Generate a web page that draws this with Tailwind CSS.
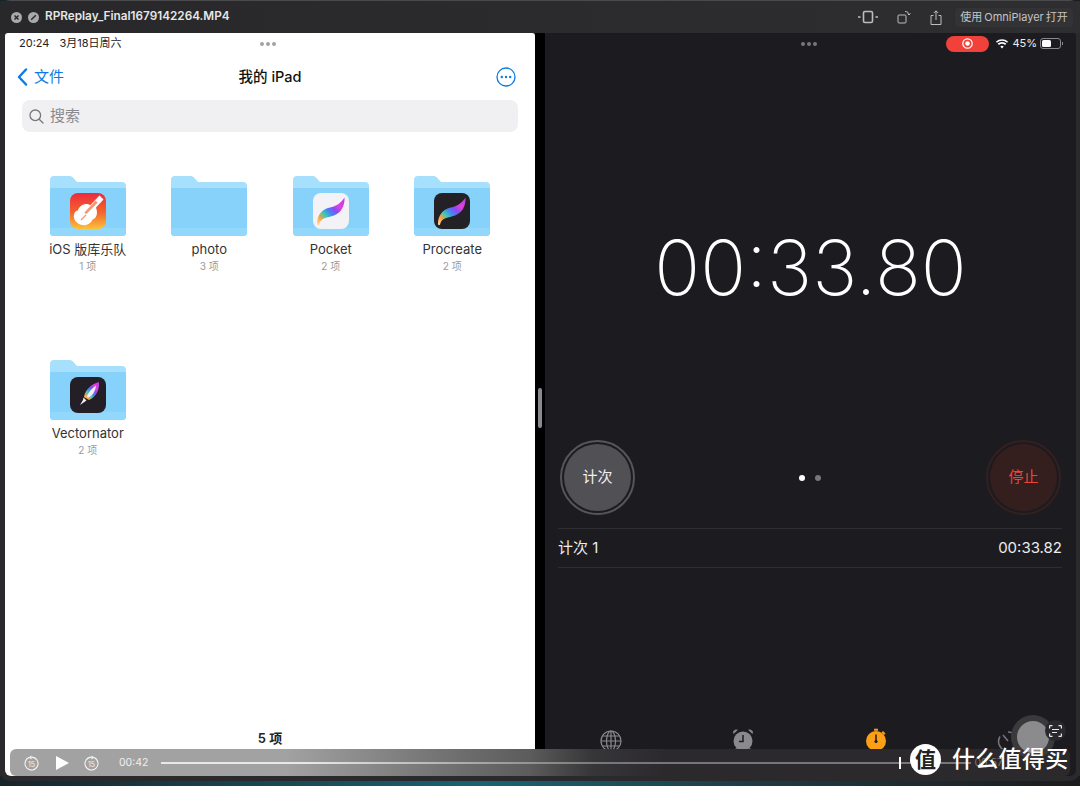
<!DOCTYPE html>
<html lang="zh">
<head>
    <meta charset="UTF-8">
    <meta name="viewport" content="width=device-width, initial-scale=1.0">
    <title>RPReplay_Final1679142264.MP4</title>
    <script src="https://cdn.jsdelivr.net/npm/@tailwindcss/browser@4"></script>
</head>
<body class="bg-[linear-gradient(90deg,#16242a,#1b6274_45%,#1f3a44_70%,#1b1b1d)] font-['Inter','Noto_Sans_CJK_SC',sans-serif]">
    <svg class="absolute w-0 h-0">
        <defs>
            <linearGradient id="feather" x1="0" y1="1" x2="1" y2="0">
                <stop offset="0" stop-color="#ffe9a8"/>
                <stop offset=".18" stop-color="#ffa040"/>
                <stop offset=".33" stop-color="#40c8b0"/>
                <stop offset=".45" stop-color="#3f8cf0"/>
                <stop offset=".6" stop-color="#8a4af0"/>
                <stop offset=".75" stop-color="#e040e0"/>
                <stop offset="1" stop-color="#b040e0"/>
            </linearGradient>
            <linearGradient id="garage" x1="0" y1="0" x2="0" y2="1">
                <stop offset="0" stop-color="#ee2a3c"/>
                <stop offset=".55" stop-color="#f4672d"/>
                <stop offset="1" stop-color="#fbc23b"/>
            </linearGradient>
            <symbol id="folder" viewBox="0 0 76 60">
                <path d="M0 4a4 4 0 0 1 4-4h15c2 0 3 .6 4.400 1.900L27 6h45a4 4 0 0 1 4 4v46a4 4 0 0 1-4 4H4a4 4 0 0 1-4-4z" fill="#a6e0fc"/>
                <path d="M0 12h76v44a4 4 0 0 1-4 4H4a4 4 0 0 1-4-4z" fill="#86d2fa"/>
                <path d="M0 52h76v4a4 4 0 0 1-4 4H4a4 4 0 0 1-4-4z" fill="#92d8fc"/>
            </symbol>
            <symbol id="plume" viewBox="0 0 36 36">
                <path d="M4 31C4 22 9 16 17 14.500C23 13.500 28 10 31.500 4.500C32 13 28 20 21 22.500C14 25 8 24 6 31.500C5.500 32.500 4 32.500 4 31z" fill="url(#feather)"/>
            </symbol>
        </defs>
    </svg>

    <div class="relative w-[1080px] h-[786px] overflow-hidden">
        <div class="flex flex-col h-[781px] rounded-[10px] bg-[#2a2a2c] border-t border-[#4a4a4c]">
            <!-- title bar -->
            <div class="flex items-center h-[32px] shrink-0 pl-[11px] pr-[7px] bg-[linear-gradient(90deg,#28282a,#2e2e30)]">
                <svg class="w-[11px] h-[11px]" viewBox="0 0 11 11"><circle cx="5.500" cy="5.500" r="5.500" fill="#a9a9a9"/><path d="M3.500 3.500l4 4M7.500 3.500l-4 4" stroke="#2a2a2c" stroke-width="1.500"/></svg>
                <svg class="w-[11px] h-[11px] ml-[6px]" viewBox="0 0 11 11"><circle cx="5.500" cy="5.500" r="5.500" fill="#a9a9a9"/><path d="M3.200 7.800l4.600-4.600" stroke="#2a2a2c" stroke-width="1.500"/></svg>
                <span class="ml-[6px] text-[11.750px] font-semibold text-[#e6e6e6]">RPReplay_Final1679142264.MP4</span>
                <div class="ml-auto flex items-center">
                    <svg class="w-[20px] h-[14px]" viewBox="0 0 20 14" fill="none" stroke="#bdbdbd"><rect x="5.500" y="1.500" width="9" height="11" rx="1.500" stroke-width="1.600"/><path d="M0 7h2.500M17.500 7H20" stroke-width="1.500"/></svg>
                    <svg class="w-[14px] h-[14px] ml-[19px]" viewBox="0 0 14 14" fill="none" stroke="#bdbdbd"><rect x="1" y="5" width="8" height="8" rx="1"/><path d="M8 1.500c2.500 0 4 1.200 4 3.500M10.500 3.500L12 5l1.500-1.500"/></svg>
                    <svg class="w-[12px] h-[15px] ml-[19px]" viewBox="0 0 12 15" fill="none" stroke="#bdbdbd"><path d="M3.500 5.500H1v9h10v-9H8.500M6 10V1M3.800 3L6 .8 8.200 3"/></svg>
                    <div class="ml-[13px] h-[19px] w-[118px] flex items-center justify-center rounded-[4px] bg-[#333335] text-[11px] text-[#c4c4c4]">使用<span class="ml-[2px]">OmniPlayer</span><span class="ml-[2px]">打开</span></div>
                </div>
            </div>

            <div class="flex flex-1 min-h-0 pl-[5px] pr-[4px] bg-[#2a2a2c]">
                <!-- Files -->
                <div class="w-[530px] flex flex-col bg-white rounded-t-[3px] rounded-b-[6px] text-[#111]">
                    <div class="relative flex items-center h-[21px] pl-[14px] text-[11px] text-[#222]">
                        <span>20:24</span><span class="ml-[10px]">3月18日周六</span>
                        <div class="absolute left-[255px] flex gap-[2px]"><i class="w-[4px] h-[4px] rounded-full bg-[#a3a3a3]"></i><i class="w-[4px] h-[4px] rounded-full bg-[#a3a3a3]"></i><i class="w-[4px] h-[4px] rounded-full bg-[#a3a3a3]"></i></div>
                    </div>
                    <div class="relative flex items-center h-[46px] pl-[12px] pr-[19px] shrink-0">
                        <svg class="w-[11px] h-[18px]" viewBox="0 0 11 18" fill="none" stroke="#0a7ae6" stroke-width="2.400" stroke-linecap="round" stroke-linejoin="round"><path d="M9 1.500L2 9l7 7.500"/></svg>
                        <span class="ml-[6px] text-[15px] text-[#0a7ae6]">文件</span>
                        <span class="absolute inset-x-0 top-0 h-[46px] flex items-center justify-center text-[14.500px] font-medium">我的 iPad</span>
                        <svg class="ml-auto w-[20px] h-[20px]" viewBox="0 0 20 20"><circle cx="10" cy="10" r="9" fill="none" stroke="#0a7ae6" stroke-width="1.300"/><circle cx="5.800" cy="10" r="1.200" fill="#0a7ae6"/><circle cx="10" cy="10" r="1.200" fill="#0a7ae6"/><circle cx="14.200" cy="10" r="1.200" fill="#0a7ae6"/></svg>
                    </div>
                    <div class="mx-[17px] h-[32px] shrink-0 flex items-center pl-[7px] rounded-[8px] bg-[#f0eff1] text-[15px] text-[#8a8a8e]">
                        <svg class="w-[15px] h-[15px]" viewBox="0 0 15 15" fill="none" stroke="#77777b" stroke-width="1.300" stroke-linecap="round"><circle cx="6.300" cy="6.300" r="5.300"/><path d="M10.200 10.200L14 14"/></svg>
                        <span class="ml-[6px]">搜索</span>
                    </div>
                    <div class="grid grid-cols-4 auto-rows-[184px] w-[486px] ml-[22px] mt-[44px] text-center">
                        <div class="flex flex-col items-center">
                            <div class="relative w-[76px] h-[60px]">
                                <svg class="w-[76px] h-[60px]"><use href="#folder"/></svg>
                                <svg class="absolute left-[20px] top-[17px] w-[36px] h-[36px]" viewBox="0 0 36 36">
                                    <rect width="36" height="36" rx="8" fill="url(#garage)"/>
                                    <path d="M29.500 2.500l4 4-7.500 8 .8 3c.8 5-1.300 8-4.300 9-1.500 4-6.500 7-11.500 5.300C5 30 2.500 24.500 4.500 20c.7-1.500 2-2.300 3.300-2.600 1-3 3.500-5.700 6.700-6.200 2.300-.4 4.300.2 5.700 1.100z" fill="#fff"/>
                                    <path d="M25.500 7.500l2.200 2.200-11.500 11.500-1.800-1.800z" fill="#f09a78"/>
                                    <path d="M11 27l5-5" stroke="#f09a78" stroke-width="1.200"/>
                                </svg>
                            </div>
                            <p class="mt-[6px] text-[13px] leading-[15px] text-[#333]">iOS 版库乐队</p>
                            <p class="mt-[2px] text-[10px] leading-[14px] text-[#9a9a9a]">1 项</p>
                        </div>
                        <div class="flex flex-col items-center">
                            <svg class="w-[76px] h-[60px]"><use href="#folder"/></svg>
                            <p class="mt-[6px] text-[13px] leading-[15px] text-[#333]">photo</p>
                            <p class="mt-[2px] text-[10px] leading-[14px] text-[#9a9a9a]">3 项</p>
                        </div>
                        <div class="flex flex-col items-center">
                            <div class="relative w-[76px] h-[60px]">
                                <svg class="w-[76px] h-[60px]"><use href="#folder"/></svg>
                                <div class="absolute left-[20px] top-[17px] w-[36px] h-[36px] rounded-[8px] bg-[#f3f2f6]"><svg class="w-[36px] h-[36px]"><use href="#plume"/></svg></div>
                            </div>
                            <p class="mt-[6px] text-[13px] leading-[15px] text-[#333]">Pocket</p>
                            <p class="mt-[2px] text-[10px] leading-[14px] text-[#9a9a9a]">2 项</p>
                        </div>
                        <div class="flex flex-col items-center">
                            <div class="relative w-[76px] h-[60px]">
                                <svg class="w-[76px] h-[60px]"><use href="#folder"/></svg>
                                <div class="absolute left-[20px] top-[17px] w-[36px] h-[36px] rounded-[8px] bg-[#232126]"><svg class="w-[36px] h-[36px]"><use href="#plume"/></svg></div>
                            </div>
                            <p class="mt-[6px] text-[13px] leading-[15px] text-[#333]">Procreate</p>
                            <p class="mt-[2px] text-[10px] leading-[14px] text-[#9a9a9a]">2 项</p>
                        </div>
                        <div class="flex flex-col items-center">
                            <div class="relative w-[76px] h-[60px]">
                                <svg class="w-[76px] h-[60px]"><use href="#folder"/></svg>
                                <svg class="absolute left-[20px] top-[17px] w-[36px] h-[36px]" viewBox="0 0 36 36">
                                    <rect width="36" height="36" rx="8" fill="#241f26"/>
                                    <path d="M14 20C15 13 21 7 29 5c.5 8-3 15-10 18z" fill="url(#feather)"/>
                                    <path d="M16.500 20C18.500 15 22 11 26 8.500c-.5 5-3 9.500-7 12z" fill="#f4eef2"/>
                                    <path d="M13.500 20.500l3 3-1.800 1.300-4.700 3.200 3-5z" fill="#f4eef2"/>
                                </svg>
                            </div>
                            <p class="mt-[6px] text-[13px] leading-[15px] text-[#333]">Vectornator</p>
                            <p class="mt-[2px] text-[10px] leading-[14px] text-[#9a9a9a]">2 项</p>
                        </div>
                    </div>
                    <p class="mt-auto mb-[30px] text-center text-[13px] leading-[16px] font-semibold text-[#222]">5 项</p>
                </div>

                <div class="w-[10px] bg-black relative"></div>

                <!-- Clock -->
                <div class="flex-1 flex flex-col bg-[#1c1b20] rounded-t-[3px] rounded-b-[6px] text-white">
                    <div class="relative flex items-center justify-end h-[21px] pr-[13px] text-[11px] text-[#eee]">
                        <div class="absolute left-[256px] flex gap-[2px]"><i class="w-[4px] h-[4px] rounded-full bg-[#77777b]"></i><i class="w-[4px] h-[4px] rounded-full bg-[#77777b]"></i><i class="w-[4px] h-[4px] rounded-full bg-[#77777b]"></i></div>
                        <div class="flex items-center justify-center w-[43px] h-[16px] rounded-full bg-[#f0423a]">
                            <svg class="w-[11px] h-[11px]" viewBox="0 0 11 11"><circle cx="5.500" cy="5.500" r="4.700" fill="none" stroke="#fff" stroke-width="1.200"/><circle cx="5.500" cy="5.500" r="2.300" fill="#fff"/></svg>
                        </div>
                        <svg class="ml-[7px] w-[12px] h-[10px]" viewBox="0 0 12 10" fill="#fff"><path d="M6 9.500L4.300 7.500a2.600 2.600 0 0 1 3.400 0zM2.900 6L1.700 4.600a6.500 6.500 0 0 1 8.600 0L9.100 6a4.700 4.700 0 0 0-6.200 0zM.9 3.700L0 2.600a9 9 0 0 1 12 0l-.9 1.100a7.600 7.600 0 0 0-10.200 0z"/></svg>
                        <span class="ml-[4px]">45%</span>
                        <div class="ml-[3px] flex items-center">
                            <div class="w-[21px] h-[11px] p-[1px] rounded-[3px] border border-[#8a8a8e]"><div class="w-[9px] h-full bg-white rounded-[1.500px]"></div></div>
                            <i class="w-[1px] h-[3px] bg-[#8a8a8e] ml-[1px]"></i>
                        </div>
                    </div>
                    <div class="mt-[175px] h-[76px] flex items-center justify-center text-[76px] leading-none font-[150] [font-feature-settings:'case'] text-white">00:33.80</div>
                    <div class="mt-[135px] px-[15px] flex items-center justify-between">
                        <div class="flex items-center justify-center w-[75px] h-[75px] rounded-full border-2 border-[#56555a] p-[2px]">
                            <div class="w-full h-full rounded-full bg-[#515054] flex items-center justify-center text-[15px] text-[#f0f0f0]">计次</div>
                        </div>
                        <div class="flex gap-[10px] mr-[2px]"><i class="w-[6px] h-[6px] rounded-full bg-white"></i><i class="w-[6px] h-[6px] rounded-full bg-[#77777b]"></i></div>
                        <div class="flex items-center justify-center w-[75px] h-[75px] rounded-full border-2 border-[#33201f] p-[2px]">
                            <div class="w-full h-full rounded-full bg-[#351e1e] flex items-center justify-center text-[15px] text-[#ef4438]">停止</div>
                        </div>
                    </div>
                    <div class="mx-[13px] mr-[14px] mt-[13px] h-[40px] flex items-center justify-between border-y border-[#2f2e33] text-[15px] text-[#ececec]">
                        <span>计次 1</span><span>00:33.82</span>
                    </div>
                    <div class="mt-auto flex justify-between pl-[55px] pr-[57px] h-[46px]">
                        <svg class="w-[22px] h-[22px]" viewBox="0 0 22 22" fill="none" stroke="#8a8a8e" stroke-width="1.200"><circle cx="11" cy="11" r="10"/><ellipse cx="11" cy="11" rx="4.500" ry="10"/><path d="M11 1v20M1 11h20M2.500 6h17M2.500 16h17"/></svg>
                        <svg class="w-[22px] h-[24px] -mt-[2px]" viewBox="0 0 22 24"><circle cx="11" cy="13" r="9.500" fill="#8a8a8e"/><path d="M1.500 6L6 1.800 3.500 1.500 1 3.500zM20.500 6L16 1.800l2.500-.3L21 3.500zM4 20l-2 3h3l2-2zM18 20l2 3h-3l-2-2z" fill="#8a8a8e"/><path d="M11 7v6.500H7" fill="none" stroke="#1c1b20" stroke-width="1.500"/></svg>
                        <svg class="w-[22px] h-[24px] -mt-[2px]" viewBox="0 0 22 24"><circle cx="11" cy="13" r="10" fill="#fd9f14"/><path d="M9 .8h4v2H9zM18 3l2.500 2.500L19 7l-2.500-2.500z" fill="#fd9f14"/><path d="M11 6.500V13" stroke="#1c1b20" stroke-width="1.500"/><circle cx="11" cy="13.500" r="1.600" fill="#1c1b20"/></svg>
                        <svg class="w-[22px] h-[22px]" viewBox="0 0 22 22" fill="none" stroke="#77777b" stroke-width="1.500"><path d="M11 2a9.500 9.500 0 1 1-8 4.500M11 11L6 5"/></svg>
                    </div>
                </div>
            </div>
            <div class="h-[5px] shrink-0"></div>
        </div>

        <!-- player controls over the video -->
        <div class="absolute left-[10px] top-[749px] w-[1060px] h-[27px] flex items-center rounded-[6px] bg-[linear-gradient(90deg,#a2a2a2_0,#a2a2a2_26%,#727272_41%,#5c5c5c_49%,#363537_55%,#2b292b_62%,#2b292b_100%)]">
            <svg class="ml-[14px] w-[15px] h-[16px]" viewBox="0 0 15 16" fill="none" stroke="#f4f4f4" stroke-width="1.100"><path d="M5 2.600a6.500 6.500 0 1 0 2.500-.500"/><path d="M7.500 .5L4.500 2.600l3 2z" fill="#f4f4f4" stroke="none"/><text x="7.500" y="11.600" font-size="7" fill="#f4f4f4" stroke="none" text-anchor="middle">15</text></svg>
            <svg class="ml-[17px] w-[13px] h-[14px]" viewBox="0 0 13 14"><path d="M0 0l13 7-13 7z" fill="#fff"/></svg>
            <svg class="ml-[15px] w-[15px] h-[16px]" viewBox="0 0 15 16" fill="none" stroke="#f4f4f4" stroke-width="1.100"><path d="M10 2.600a6.500 6.500 0 1 1-2.500-.500"/><path d="M7.500 .5l3 2.100-3 2z" fill="#f4f4f4" stroke="none"/><text x="7.500" y="11.600" font-size="7" fill="#f4f4f4" stroke="none" text-anchor="middle">15</text></svg>
            <span class="ml-[20px] text-[10.500px] text-[#f0f0f0]">00:42</span>
            <div class="ml-[13px] w-[738px] h-[2px] bg-[linear-gradient(90deg,#e8e8e8_0,#e8e8e8_20%,#b0b0b0_40%,#77767a_60%,#77767a_100%)]"></div>
            <i class="w-[2px] h-[12px] bg-white"></i>
            <div class="w-[70px] h-[2px] bg-[#77767a]"></div>
            <span class="ml-[3px] text-[10.500px] text-[#77767a]">00:57</span>
        </div>

        <!-- floating controls and site watermark -->
        <div class="absolute left-[1011px] top-[715px] w-[44px] h-[44px] rounded-full bg-[#3a3a3c] flex items-center justify-center">
            <div class="w-[32px] h-[32px] rounded-full bg-[#8b8a8d]"></div>
        </div>
        <div class="absolute left-[1045px] top-[720px] w-[21px] h-[21px] rounded-full bg-[#29282c] flex items-center justify-center">
            <svg class="w-[13px] h-[12px]" viewBox="0 0 13 12" fill="none" stroke="#e8e8e8" stroke-width="1.200"><path d="M.6 3.500V1.200a.6.6 0 0 1 .6-.6h2.300M9.500.6h2.300a.6.6 0 0 1 .6.6v2.300M12.400 8.500v2.300a.6.6 0 0 1-.6.6H9.500M3.500 11.400H1.200a.6.6 0 0 1-.6-.6V8.500M3 4.500h7M3 7.500h5"/></svg>
        </div>
        <div class="absolute left-[910px] top-[744px] flex items-center">
            <div class="w-[31px] h-[31px] rounded-full bg-white flex items-center justify-center text-[21px] font-bold text-[#222]">值</div>
            <span class="ml-[11px] text-[23px] leading-none tracking-[0.3px] text-white font-medium">什么值得买</span>
        </div>

        <!-- split view handle -->
        <div class="absolute left-[538px] top-[388px] w-[4px] h-[40px] rounded-full bg-[#8b8a90]"></div>
    </div>
</body>
</html>
